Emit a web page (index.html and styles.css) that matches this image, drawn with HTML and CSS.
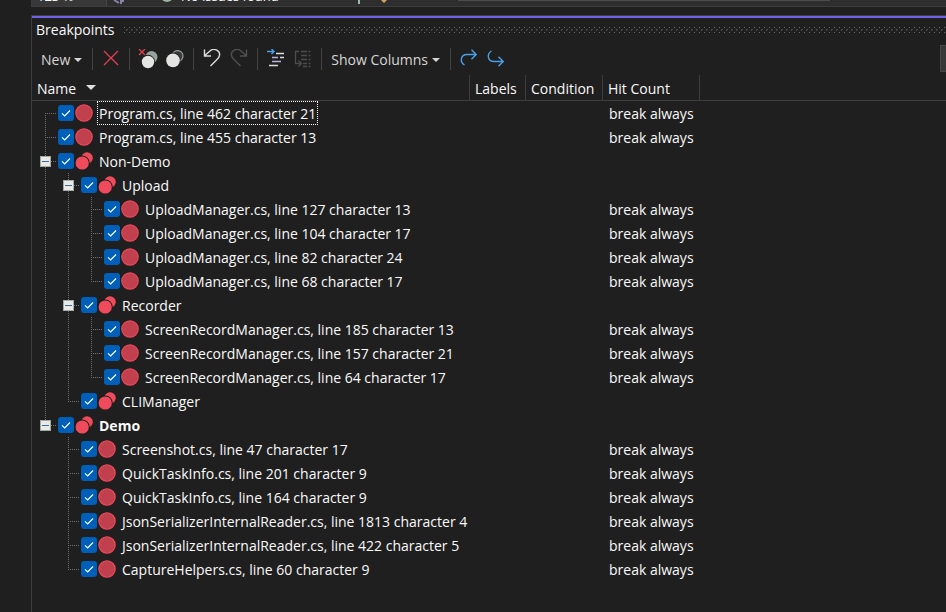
FILE: index.html
```html
<!DOCTYPE html>
<html lang="en">
<head>
  <meta charset="UTF-8">
  <meta name="viewport" content="width=device-width, initial-scale=1.0">
  <title>Breakpoints</title>
  <link rel="stylesheet" href="styles.css">
</head>
<body>

<div class="editor-bar">
  <span class="zoom-level">123 %</span>
  <svg class="bar-icon" width="14" height="6" viewBox="0 0 14 6"><path d="M3 0l5 3M10 0v4M12 0v2" fill="none" stroke="#8a80a8" stroke-width="2"/></svg>
  <svg class="bar-status" width="12" height="6" viewBox="0 0 12 6"><circle cx="6" cy="-4" r="6" fill="#9fb3a2"/></svg>
  <span class="issues">No issues found</span>
  <span class="bar-mark"></span>
  <svg class="bar-brush" width="8" height="6" viewBox="0 0 8 6"><path d="M1 0h6L4 3z" fill="#d9a066"/></svg>
  <span class="bar-scroll"></span>
</div>

<div class="panel">
  <div class="title-bar">
    <h2>Breakpoints</h2>
    <svg class="grip" height="6">
      <defs>
        <pattern id="dots" width="5" height="6" patternUnits="userSpaceOnUse">
          <path d="M0 0h1v1h-1zM0 5h1v1h-1z" fill="#6a6a6a"/>
          <path d="M2 2h2v1h-2zM2 3h1v1h-1z" fill="#464646"/>
        </pattern>
      </defs>
      <rect width="100%" height="6" fill="url(#dots)"/>
    </svg>
  </div>

  <div class="toolbar">
    <button class="menu-button">New<span class="caret"></span></button>
    <span class="separator"></span>
    <button class="icon-button" aria-label="Delete">
      <svg width="20" height="20" viewBox="0 0 20 20"><path d="M3 2l14 14M17 2L3 16" fill="none" stroke="#e0404f" stroke-width="1.3"/></svg>
    </button>
    <span class="separator"></span>
    <button class="icon-button" aria-label="Delete all breakpoints">
      <svg width="22" height="20" viewBox="0 0 22 20">
        <circle cx="14.5" cy="8" r="6" fill="#98a39f"/>
        <circle cx="11" cy="13" r="7.2" fill="#1f1f1f"/>
        <circle cx="11" cy="13" r="6.2" fill="#e4e4e2"/>
        <path d="M2 0l6 6M8 0L2 6" fill="none" stroke="#e0404f" stroke-width="1.3"/>
      </svg>
    </button>
    <button class="icon-button" aria-label="Disable all breakpoints">
      <svg width="20" height="20" viewBox="0 0 20 20">
        <circle cx="12.6" cy="7" r="5.4" fill="#3a3a3a" stroke="#98a39f" stroke-width="1.2"/>
        <circle cx="8" cy="11" r="7.4" fill="#1f1f1f"/>
        <circle cx="8" cy="11.4" r="6.8" fill="#e4e4e2"/>
      </svg>
    </button>
    <span class="separator"></span>
    <button class="icon-button" aria-label="Undo">
      <svg width="20" height="20" viewBox="0 0 20 20"><path d="M2.5 0.5v6.5h6.5M2.8 6.6L8 2c4-3.5 11-0.5 9.3 5.200C16.8 9 15.5 10 14 11.500L8.500 17" fill="none" stroke="#dcdcdc" stroke-width="1.400"/></svg>
    </button>
    <button class="icon-button" aria-label="Redo" disabled>
      <svg width="20" height="20" viewBox="0 0 20 20"><path d="M17.500 0.500v6.500h-6.500M17.200 6.600L12 2C8-1.500 1 1.500 2.700 7.200C3.200 9 4.500 10 6 11.500L11.500 17" fill="none" stroke="#505050" stroke-width="1.400"/></svg>
    </button>
    <span class="separator"></span>
    <button class="icon-button" aria-label="Go to source code">
      <svg width="20" height="20" viewBox="0 0 20 20">
        <path d="M1 2.500h7M5.500 0l2.500 2.500L5.500 5" fill="none" stroke="#4aa0e8" stroke-width="1.400"/>
        <path d="M10 4.500h8M14 8.500h4M3 16.500h9" fill="none" stroke="#dcdcdc" stroke-width="1.400"/>
        <path d="M6 8.500h6M6 12.500h9" fill="none" stroke="#b9b2dc" stroke-width="1.400"/>
      </svg>
    </button>
    <button class="icon-button" aria-label="Go to disassembly" disabled>
      <svg width="20" height="20" viewBox="0 0 20 20"><path d="M6 2.500H2.500v12H8M5.500 11.500l3 3l-3 3M8 2.500h6M15.500 2.500h2M8 6.500h6M15.500 6.500h2M8 10.500h6M15.500 10.500h2M10 14.500h4M15.500 14.500h2M10 17.500h4M15.500 17.500h2" fill="none" stroke="#4c4c4c" stroke-width="1.300"/></svg>
    </button>
    <span class="separator"></span>
    <button class="menu-button">Show Columns<span class="caret"></span></button>
    <span class="separator"></span>
    <button class="icon-button" aria-label="Export breakpoints">
      <svg width="20" height="20" viewBox="0 0 20 20"><path d="M5.500 16C0.500 13 1.500 5.500 8 5.500h9.500M12.500 0.800l4.700 4.700l-4.700 4.700" fill="none" stroke="#4aa0e8" stroke-width="1.400"/></svg>
    </button>
    <button class="icon-button" aria-label="Import breakpoints">
      <svg width="20" height="20" viewBox="0 0 20 20"><path d="M5.500 2C0.500 5 1.500 12.500 8 12.500h9.500M12.500 7.800l4.700 4.700l-4.700 4.700" fill="none" stroke="#4aa0e8" stroke-width="1.400"/></svg>
    </button>
    <input class="search" type="search" aria-label="Search">
  </div>

  <table class="breakpoints">
    <colgroup>
      <col class="col-name"><col class="col-labels"><col class="col-condition"><col class="col-hits"><col>
    </colgroup>
    <thead>
      <tr><th>Name<span class="sort"></span></th><th>Labels</th><th>Condition</th><th>Hit Count</th><th></th></tr>
    </thead>
    <tbody id="rows"></tbody>
  </table>
</div>

<script src="script.js"></script>
</body>
</html>
```
FILE: styles.css
```css
* {
  box-sizing: border-box;
}
body {
  margin: 0;
  padding-left: 31px;
  min-height: 100vh;
  display: flex;
  flex-direction: column;
  overflow: hidden;
  background-color: #1f1f1f;
  color: #fafafa;
  font-family: "Open Sans", "Segoe UI", sans-serif;
  font-size: 14px;
  line-height: 20px;
}
button {
  display: flex;
  align-items: center;
  justify-content: center;
  height: 24px;
  padding: 0;
  border: none;
  background: none;
  color: #d6d6d6;
  font: inherit;
}
.editor-bar {
  display: flex;
  align-items: flex-end;
  height: 7px;
  margin-bottom: 8px;
  overflow: hidden;
  background-color: #2e2e2e;
  border-bottom: 1px solid #3d3d3d;
  border-left: 1px solid #3d3d3d;
  font-size: 13px;
}
.zoom-level {
  width: 75px;
  padding-left: 5px;
  background-color: #383838;
  border-right: 1px solid #464646;
}
.bar-icon {
  margin-left: 4px;
}
.bar-status {
  margin-left: 36px;
}
.issues {
  width: 172px;
  margin-left: 8px;
}
.bar-mark {
  width: 2px;
  height: 4px;
  margin: 0 20px 2px 5px;
  align-self: flex-start;
  background-color: #9fb3b0;
}
.bar-scroll {
  width: 372px;
  height: 1px;
  margin-left: 70px;
  align-self: flex-start;
  background-color: #4d4d4d;
}

.panel {
  flex: 1;
  overflow: hidden;
  border-top: 1px solid #3d3d3d;
  border-left: 1px solid #3d3d3d;
}
.title-bar {
  display: flex;
  align-items: center;
  gap: 9px;
  height: 26px;
  padding-left: 4px;
  border-top: 2px solid #7160e8;
}
h2 {
  margin: 0;
  font-size: 14px;
  font-weight: normal;
}
.grip {
  flex: 1;
}
.toolbar {
  display: flex;
  align-items: center;
  height: 33px;
  padding-left: 4px;
}
.menu-button {
  gap: 4px;
  padding: 2px 5px 0;
}
.icon-button {
  width: 27px;
}
.separator {
  width: 1px;
  height: 22px;
  margin: 0 4px 0 5px;
  background-color: #424242;
}
.caret {
  border: 4px solid transparent;
  border-top-color: #d6d6d6;
  border-bottom: none;
}
.search {
  flex: none;
  width: 200px;
  height: 27px;
  margin-left: auto;
  margin-right: -194px;
  background-color: #383838;
  border: 1px solid #464646;
}

.breakpoints {
  width: 100%;
  table-layout: fixed;
  border-collapse: separate;
  border-spacing: 0;
}
.col-name {
  width: 438px;
}
.col-labels {
  width: 56px;
}
.col-condition {
  width: 77px;
}
.col-hits {
  width: 97px;
}
th {
  height: 26px;
  padding: 2px 0 0 5px;
  text-align: left;
  font-weight: normal;
  white-space: nowrap;
  border-right: 1px solid #3d3d3d;
  border-bottom: 1px solid #3d3d3d;
}
th:last-child {
  border-right: none;
}
.sort {
  display: inline-block;
  margin-left: 10px;
  vertical-align: 4px;
  border: 5px solid transparent;
  border-top-color: #e0e0e0;
  border-bottom: none;
}
td {
  height: 24px;
  padding: 2px 0 0 6px;
  white-space: nowrap;
}
td:first-child {
  padding: 0 0 0 2px;
}
.node {
  display: flex;
  align-items: center;
  height: 24px;
}

/* dotted tree lines */
.guide {
  --down: repeating-linear-gradient(to bottom, #707070 0 1px, transparent 1px 2px);
  --across: repeating-linear-gradient(to right, #707070 0 1px, transparent 1px 2px);
  display: flex;
  align-items: center;
  flex: none;
  width: 23px;
  height: 24px;
  padding-left: 6px;
  background-repeat: no-repeat;
}
.pass {
  background-image: var(--down);
  background-position: 11px 0;
  background-size: 1px 24px;
}
.tee, .first, .last {
  background-image: var(--down), var(--across);
  background-position: 11px 0, 11px 12px;
  background-size: 1px 24px, 12px 1px;
}
.first {
  background-position: 11px 12px, 11px 12px;
  background-size: 1px 12px, 12px 1px;
}
.last {
  background-size: 1px 12px, 12px 1px;
}
.toggle {
  width: 11px;
  height: 11px;
  background: linear-gradient(#3e6c9c, #3e6c9c) center / 7px 1px no-repeat #e9e9e5;
  border: 1px solid #a3aaa3;
}
.check {
  appearance: none;
  flex: none;
  width: 16px;
  height: 16px;
  margin: 0 1px;
  border-radius: 3px;
  background: #005fb8 url("data:image/svg+xml,%3Csvg xmlns='http://www.w3.org/2000/svg' viewBox='0 0 16 16'%3E%3Cpath d='M4 8.300l2.700 2.700L12 5.500' fill='none' stroke='white' stroke-width='1.100'/%3E%3C/svg%3E");
}
.node label {
  height: 24px;
  margin-left: 4px;
  padding: 0 1px;
  line-height: 24px;
  border: 1px solid transparent;
}
.node .focused {
  border: 1px dotted #ffffff;
}
.group-name {
  font-weight: bold;
}
```
FILE: script.js
```js
const HITS = 'break always';

const tree = [
  { name: 'Program.cs, line 462 character 21', focused: true },
  { name: 'Program.cs, line 455 character 13' },
  { name: 'Non-Demo', children: [
    { name: 'Upload', children: [
      { name: 'UploadManager.cs, line 127 character 13' },
      { name: 'UploadManager.cs, line 104 character 17' },
      { name: 'UploadManager.cs, line 82 character 24' },
      { name: 'UploadManager.cs, line 68 character 17' }
    ] },
    { name: 'Recorder', children: [
      { name: 'ScreenRecordManager.cs, line 185 character 13' },
      { name: 'ScreenRecordManager.cs, line 157 character 21' },
      { name: 'ScreenRecordManager.cs, line 64 character 17' }
    ] },
    { name: 'CLIManager', children: [] }
  ] },
  { name: 'Demo', bold: true, children: [
    { name: 'Screenshot.cs, line 47 character 17' },
    { name: 'QuickTaskInfo.cs, line 201 character 9' },
    { name: 'QuickTaskInfo.cs, line 164 character 9' },
    { name: 'JsonSerializerInternalReader.cs, line 1813 character 4' },
    { name: 'JsonSerializerInternalReader.cs, line 422 character 5' },
    { name: 'CaptureHelpers.cs, line 60 character 9' }
  ] }
];

const dotIcon = `<svg width="18" height="18" viewBox="0 0 18 18">
  <circle cx="9" cy="9" r="8.200" fill="#c0404d" stroke="#ea4858" stroke-width="1.200"/></svg>`;
const groupIcon = `<svg width="18" height="18" viewBox="0 0 18 18">
  <circle cx="12" cy="6" r="5.800" fill="#f04b5c"/>
  <circle cx="7.200" cy="11" r="7.600" fill="#1f1f1f"/>
  <circle cx="7.200" cy="11" r="6.600" fill="#f04b5c"/></svg>`;

const tbody = document.getElementById('rows');
let count = 0;

function addRows(nodes, parentGuides) {
  nodes.forEach((node, i) => {
    const id = 'bp-' + (++count);
    const last = i === nodes.length - 1;
    const kind = last ? 'last' : (count === 1 ? 'first' : 'tee');
    const open = node.children && node.children.length > 0;
    const toggle = open ? '<button class="toggle" aria-label="Collapse"></button>' : '';
    const labelClass = (node.focused ? 'focused ' : '') + (node.bold ? 'group-name' : '');

    const row = document.createElement('tr');
    row.innerHTML = `<td><div class="node">${parentGuides}<span class="guide ${kind}">${toggle}</span>
      <input type="checkbox" class="check" id="${id}" checked>
      ${node.children ? groupIcon : dotIcon}
      <label for="${id}" class="${labelClass}">${node.name}</label></div></td>
      <td></td><td></td><td>${node.children ? '' : HITS}</td><td></td>`;
    tbody.appendChild(row);

    if (open) {
      addRows(node.children, parentGuides + `<span class="guide ${last ? '' : 'pass'}"></span>`);
    }
  });
}

addRows(tree, '');
```
